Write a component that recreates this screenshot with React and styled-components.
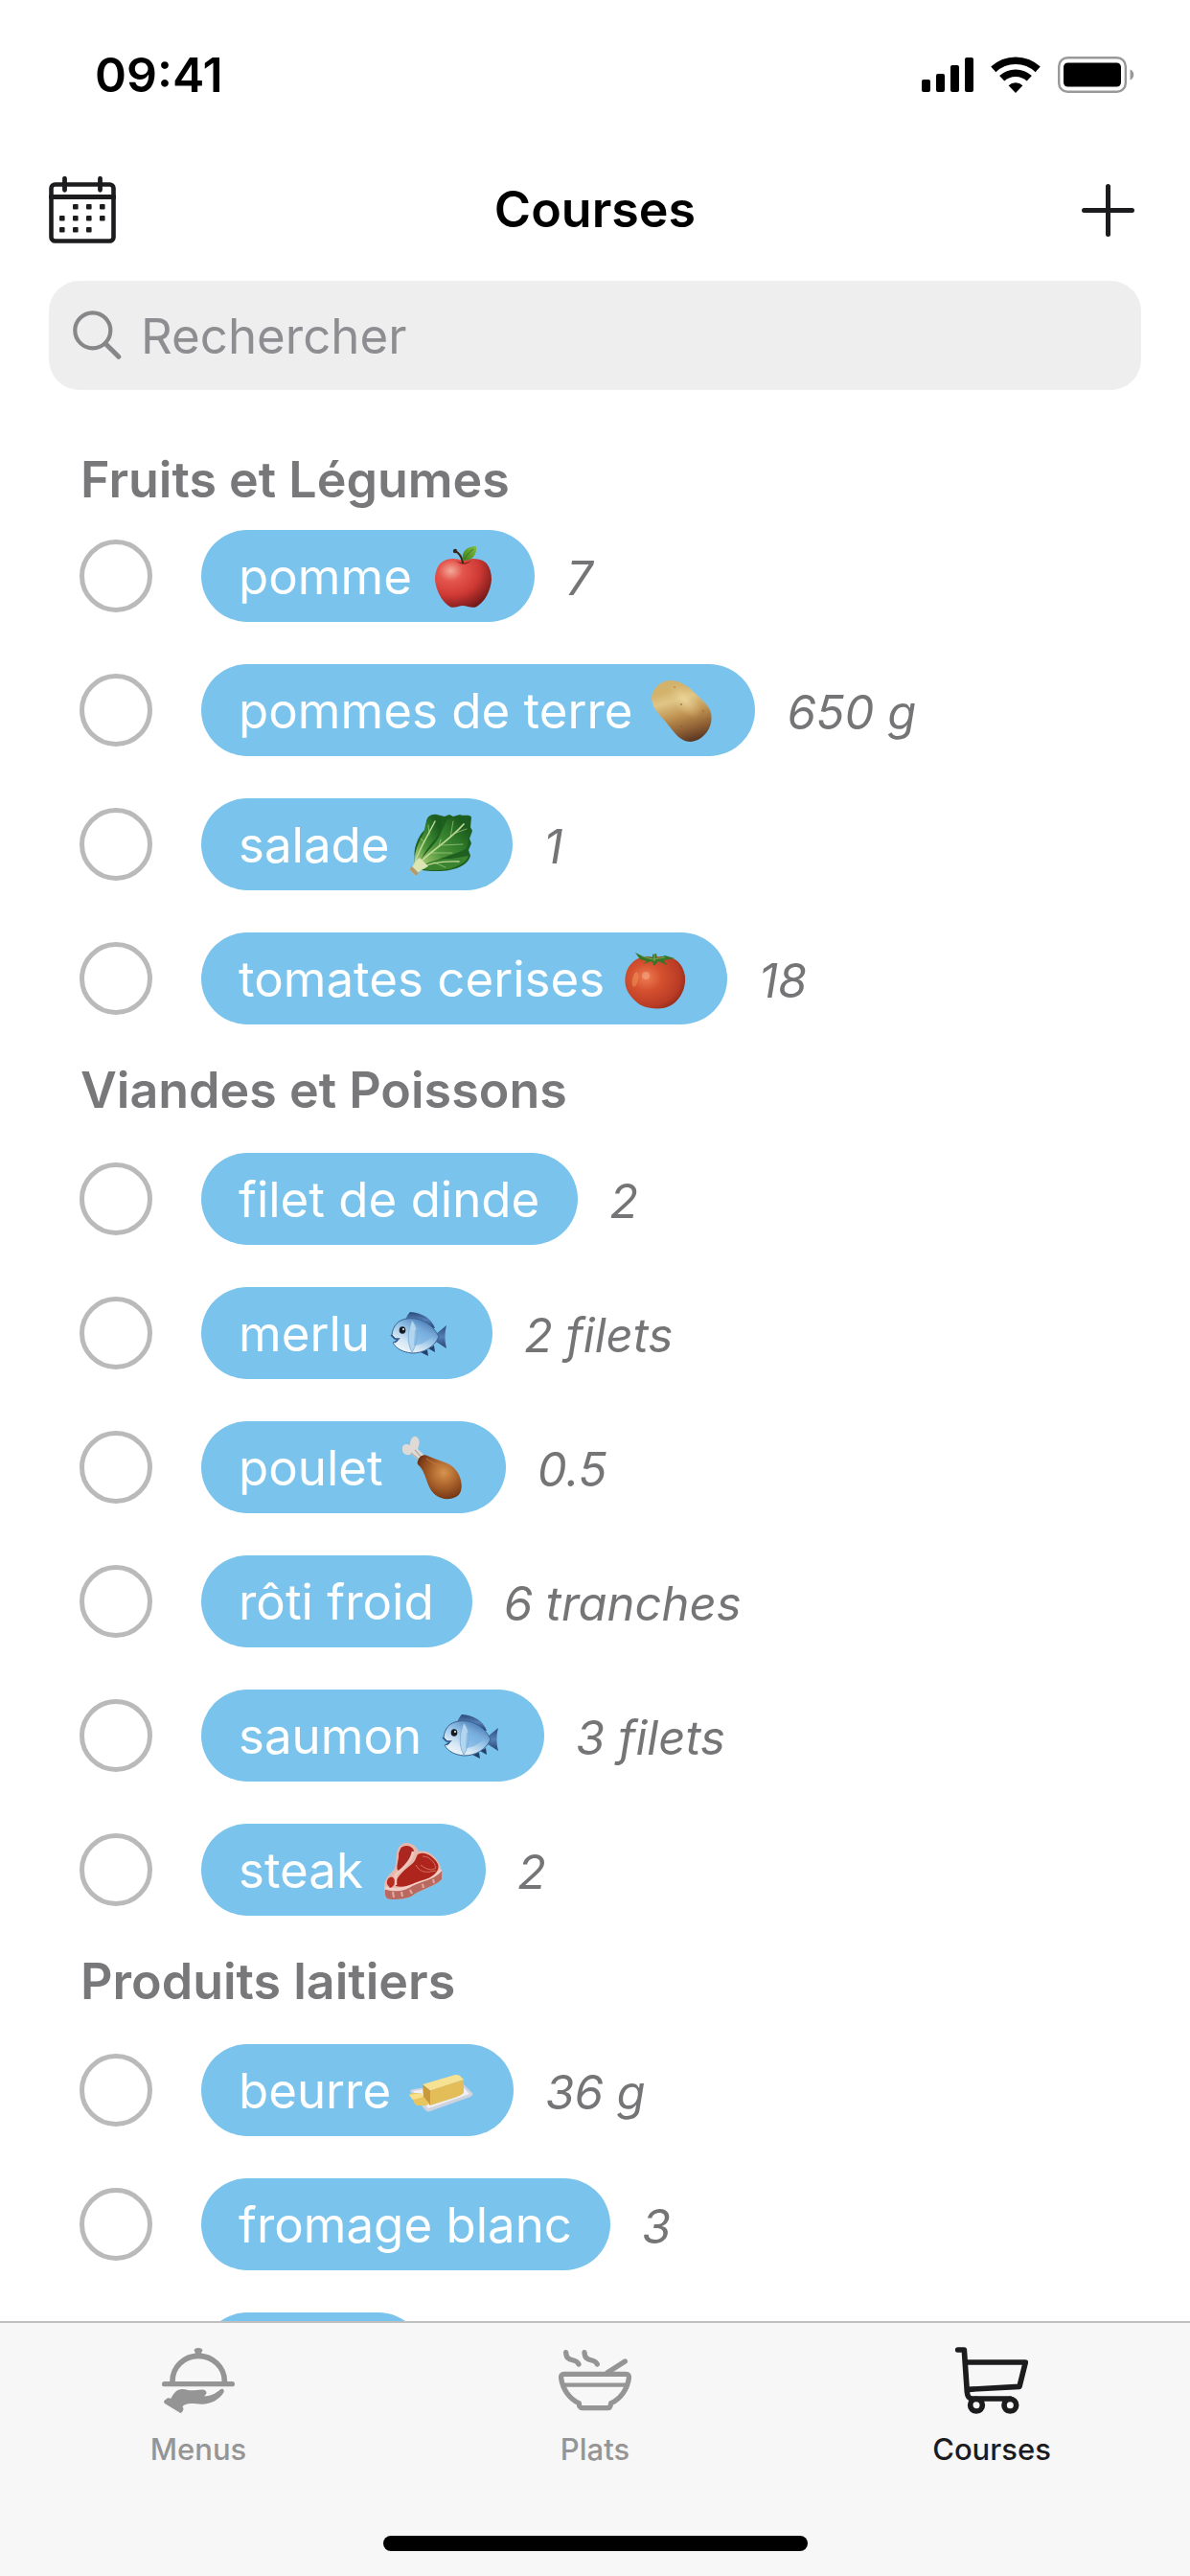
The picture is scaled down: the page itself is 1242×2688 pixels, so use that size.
import React, { useState } from 'react';
import styled, { createGlobalStyle } from 'styled-components';

const GlobalStyle = createGlobalStyle`
  * {
    box-sizing: border-box;
  }
  body {
    margin: 0;
    background: #fff;
    color: #000;
    font-family: Inter, "Liberation Sans", sans-serif;
  }
  button {
    font: inherit;
    color: inherit;
    border: none;
    background: none;
    padding: 0;
    cursor: pointer;
  }
`;

const Screen = styled.div`
  display: flex;
  flex-direction: column;
  height: 100vh;
`;

const StatusBar = styled.div`
  display: flex;
  align-items: center;
  justify-content: space-between;
  height: 156px;
  padding: 0 58px 0 99px;
`;

const Clock = styled.time`
  font-size: 50px;
  line-height: 60px;
  font-weight: 600;
`;

const StatusIcons = styled.div`
  display: flex;
  align-items: center;
  gap: 18px;
`;

const NavBar = styled.header`
  display: grid;
  grid-template-columns: 1fr auto 1fr;
  align-items: center;
  height: 126px;
  padding: 0 51px;
`;

const NavTitle = styled.h1`
  margin: 0;
  font-size: 52px;
  line-height: 60px;
  font-weight: 600;
`;

const NavButton = styled.button`
  display: flex;
  justify-self: ${({ $end }) => ($end ? 'end' : 'start')};
  padding: ${({ $end }) => ($end ? '7px' : '0')};
`;

const SearchBox = styled.label`
  display: flex;
  align-items: center;
  gap: 20px;
  height: 114px;
  flex-shrink: 0;
  margin: 11px 51px 0;
  padding: 0 25px;
  border-radius: 32px;
  background: #eeeeee;
`;

const SearchInput = styled.input`
  flex: 1;
  min-width: 0;
  padding: 0;
  border: none;
  outline: none;
  background: transparent;
  font-family: inherit;
  font-size: 51px;
  &::placeholder {
    color: #8e8e92;
    opacity: 1;
  }
`;

const List = styled.main`
  flex: 1;
  min-height: 0;
  overflow: hidden;
  padding-top: 47px;
`;

const SectionTitle = styled.h2`
  margin: 0;
  padding: 17px 84px 13px;
  font-size: 52px;
  line-height: 60px;
  font-weight: 600;
  color: #78787b;
  section:first-child > & {
    padding-bottom: 0;
  }
`;

const Items = styled.ul`
  margin: 0;
  padding: 0;
  list-style: none;
`;

const Item = styled.li`
  display: flex;
  align-items: center;
  height: 140px;
  padding: 0 83px;
`;

const Check = styled.input`
  appearance: none;
  flex-shrink: 0;
  width: 76px;
  height: 76px;
  margin: 0 51px 0 0;
  border: 5px solid #bababa;
  border-radius: 50%;
  cursor: pointer;
  &:checked {
    background: #7ac3ec;
    border-color: #7ac3ec;
  }
`;

const Pill = styled.label`
  display: flex;
  align-items: center;
  gap: 20px;
  height: 96px;
  padding: 0 40px 0 39px;
  border-radius: 48px;
  background: #7ac3ec;
  color: #fff;
  font-size: 51px;
  white-space: nowrap;
`;

const Quantity = styled.span`
  margin-left: 33px;
  padding-top: 4px;
  font-size: 49px;
  font-style: italic;
  color: #757577;
  white-space: nowrap;
`;

const TabBar = styled.nav`
  flex-shrink: 0;
  border-top: 2px solid #c0c0c1;
  background: #f7f7f7;
`;

const Tabs = styled.div`
  display: grid;
  grid-template-columns: repeat(3, 1fr);
`;

const Tab = styled.button`
  display: flex;
  flex-direction: column;
  align-items: center;
  padding-top: 24px;
  font-size: 31px;
  line-height: 36px;
  font-weight: 500;
  color: ${({ $active }) => ($active ? '#1c1c1e' : '#959595')};
`;

const TabIcon = styled.span`
  display: flex;
  align-items: center;
  height: 72px;
  margin-bottom: 18px;
`;

const HomeIndicator = styled.div`
  width: 443px;
  height: 16px;
  margin: 72px auto 26px;
  border-radius: 8px;
  background: #000;
`;

const EmojiSvg = styled.svg`
  width: 68px;
  height: 68px;
  overflow: visible;
`;

const SignalIcon = () => (
  <svg width="54" height="36" viewBox="0 0 54 36">
    <rect x="0" y="23" width="9" height="13" rx="2" />
    <rect x="15" y="17" width="9" height="19" rx="2" />
    <rect x="30" y="8" width="9" height="28" rx="2" />
    <rect x="45" y="0" width="9" height="36" rx="2" />
  </svg>
);

const WifiIcon = () => (
  <svg width="52" height="38" viewBox="0 0 52 38">
    <path d="M2.8 13.4a34 34 0 0 1 46.4 0" fill="none" stroke="#000" strokeWidth="7.6" />
    <path d="M11.7 22.8a21 21 0 0 1 28.6 0" fill="none" stroke="#000" strokeWidth="7.6" />
    <path d="M18.6 30.2a11 11 0 0 1 14.8 0L26 38z" />
  </svg>
);

const BatteryIcon = () => (
  <svg width="80" height="38" viewBox="0 0 80 38">
    <rect x="1.2" y="1.2" width="69.6" height="35.6" rx="9" fill="none" stroke="#999" strokeWidth="2.4" />
    <rect x="6" y="6.5" width="60" height="25" rx="4.5" />
    <path d="M75.5 13.5c5 1.5 5 9.5 0 11z" fill="#999" />
  </svg>
);

const dots = [
  [28, 32], [42, 32], [56, 32],
  [14, 44], [28, 44], [42, 44], [56, 44],
  [14, 56], [28, 56], [42, 56],
];

const CalendarIcon = () => (
  <svg width="70" height="70" viewBox="0 0 70 70">
    <rect x="2.5" y="8.5" width="65" height="59" rx="4" fill="none" stroke="#1c1c1e" strokeWidth="4.6" />
    <path d="M2 21.5h66M16.5 2.3v12M53.5 2.3v12" fill="none" stroke="#1c1c1e" strokeWidth="4.8" strokeLinecap="round" />
    {dots.map(([x, y]) => (
      <rect key={`${x}-${y}`} x={x - 3} y={y - 3} width="5.6" height="5.6" rx="1" fill="#1c1c1e" />
    ))}
  </svg>
);

const PlusIcon = () => (
  <svg width="55" height="55" viewBox="0 0 55 55">
    <path d="M27.5 2.5v50M2.5 27.5h50" stroke="#1c1c1e" strokeWidth="5" strokeLinecap="round" />
  </svg>
);

const SearchIcon = () => (
  <svg width="51" height="52" viewBox="0 0 51 52">
    <circle cx="20.8" cy="20.8" r="18.5" fill="none" stroke="#87878a" strokeWidth="4.2" />
    <path d="M34 34.5L47.8 48.3" stroke="#87878a" strokeWidth="5" strokeLinecap="round" />
  </svg>
);

const ClocheIcon = () => (
  <svg width="76" height="68" viewBox="207 150 228 204" fill="currentColor">
    <rect x="207" y="255" width="228" height="16" rx="8" />
    <path d="M240 258v-4c0-44 36-79 81-79s82 35 82 79v4" fill="none" stroke="currentColor" strokeWidth="17" />
    <path d="M310 168c3-4 0-6-2-9-1-4 3-9 13-9s14 5 13 9c-2 3-5 5-2 9z" />
    <path d="M215 314l8-6c4-3 7 0 12 0 6-9 13-27 34-29 12-1 20 5 33 4 14 0 24-4 36-2 9 2 11 11 5 16l-4 4c24 0 38-11 49-20 8-6 17 0 12 9-13 21-39 36-69 36-17 0-34-5-48 0-8 3-12 6-11 9 6 6-1 17-7 19l-48-29c-4-3-5-7-2-11z" />
  </svg>
);

const BowlIcon = () => (
  <svg width="76" height="64" viewBox="249 158 228 190" fill="none" stroke="currentColor" strokeWidth="16" strokeLinecap="round" strokeLinejoin="round">
    <path d="M266 233h194c7 0 10 5 9 13-4 32-25 64-56 78-1 9-4 15-10 15h-80c-6 0-10-6-10-15-31-14-52-46-56-78-1-8 2-13 9-13z" />
    <path d="M263 267h200" strokeWidth="13" strokeLinecap="butt" />
    <path d="M402 228l55-35" />
    <path d="M272 165c1 34 32 16 40 37M330 165c1 34 32 16 40 37" />
  </svg>
);

const CartIcon = () => (
  <svg width="76" height="70" viewBox="441 147 228 210" fill="none" stroke="currentColor" strokeWidth="17" strokeLinecap="round" strokeLinejoin="round">
    <path d="M449 156h20l9 132c1 14 5 21 17 21h118" />
    <path d="M474 195h187l-19 76-160 9" />
    <circle cx="507" cy="329" r="19" />
    <circle cx="613" cy="329" r="19" />
  </svg>
);

const Apple = () => (
  <>
    <defs>
      <radialGradient id="apple" cx="0.28" cy="0.25" r="0.85">
        <stop offset="0" stopColor="#f3aa9c" />
        <stop offset="0.25" stopColor="#e4564d" />
        <stop offset="0.6" stopColor="#cf3934" />
        <stop offset="1" stopColor="#6f1717" />
      </radialGradient>
      <linearGradient id="appleLeaf" x1="0" y1="1" x2="1" y2="0">
        <stop offset="0" stopColor="#3f7f1e" />
        <stop offset="1" stopColor="#7fbf42" />
      </linearGradient>
    </defs>
    <path d="M33 18C28 16 22 15 16 17C7 20 4 29 4 38C5 49 11 60 18 65C23 69 28 65 33 65C38 65 44 69 49 65C57 59 62 49 63 38C63 27 59 19 51 17C44 15 38 16 33 18Z" fill="url(#apple)" />
    <path d="M26 18Q33 22 42 18Q34 26 26 18Z" fill="#7d1d1b" opacity="0.7" />
    <path d="M33 20C32 14 29 10 25 8" fill="none" stroke="#3c2417" strokeWidth="2" strokeLinecap="round" />
    <circle cx="25" cy="8" r="2.2" fill="#3c2417" />
    <path d="M33 18C31 8 38 3 47 3C48 12 43 18 33 18Z" fill="url(#appleLeaf)" />
    <path d="M35 16Q39 9 44 6" fill="none" stroke="#326b17" strokeWidth="0.8" />
  </>
);

const Potato = () => (
  <>
    <defs>
      <linearGradient id="potato" x1="0.35" y1="0.15" x2="0.6" y2="1">
        <stop offset="0" stopColor="#d3b26c" />
        <stop offset="0.2" stopColor="#dfc686" />
        <stop offset="0.5" stopColor="#bf9251" />
        <stop offset="0.8" stopColor="#8b5c32" />
        <stop offset="1" stopColor="#5c3924" />
      </linearGradient>
      <radialGradient id="potatoLight">
        <stop offset="0" stopColor="#f2dda4" stopOpacity="0.7" />
        <stop offset="1" stopColor="#e6cb8b" stopOpacity="0" />
      </radialGradient>
    </defs>
    <path d="M20 3C29 3 37 8 43 14C49 20 57 26 61 34C67 49 55 66 41 67C29 67 24 57 17 49C11 41 0 33 0 21C1 11 10 3 20 3Z" fill="url(#potato)" />
    <ellipse cx="35" cy="24" rx="22" ry="12" fill="url(#potatoLight)" transform="rotate(48 35 24)" />
    <g fill="#8b6030" opacity="0.7">
      <circle cx="31" cy="28" r="1" />
      <circle cx="24" cy="10" r="0.8" />
      <circle cx="54" cy="35" r="0.9" />
      <circle cx="31" cy="51" r="1" />
      <circle cx="59" cy="43" r="0.9" />
    </g>
  </>
);

const Lettuce = () => (
  <>
    <defs>
      <linearGradient id="leaf" x1="0.1" y1="0.9" x2="0.9" y2="0.2">
        <stop offset="0" stopColor="#a3c670" />
        <stop offset="0.35" stopColor="#4f963b" />
        <stop offset="0.7" stopColor="#307c2b" />
        <stop offset="1" stopColor="#1c5c1e" />
      </linearGradient>
    </defs>
    <path d="M7 60C17 62 32 63 42 61C53 59 62 54 64 46L62 40L65 33L63 28L66 20L64 16L65 6C64 2 57 5 53 3L46 5L42 3L37 5L29 3C23 2 19 5 18 10L16 19C11 24 9 29 7 35C4 43 7 50 5 55Z" fill="#1f5f20" />
    <path d="M9 58C14 42 29 36 34 20L40 8C47 5 56 4 64 6C64 16 62 28 60 38C48 46 28 47 13 60Z" fill="url(#leaf)" />
    <path d="M6 54C5 43 9 35 12 28C18 21 16 12 21 6L32 5C36 13 32 22 27 29C19 38 14 45 10 57Z" fill="url(#leaf)" />
    <path d="M11 59C21 50 33 49 44 49L62 46C60 53 51 57 42 60C31 61 21 62 11 59Z" fill="#3a8430" />
    <g fill="none" stroke="#bfd997" strokeLinecap="round">
      <path d="M6 59C18 43 37 35 57 13" strokeWidth="1.8" />
      <path d="M5 56C11 37 18 28 27 10" strokeWidth="1.5" />
      <path d="M9 60Q24 51 52 52" strokeWidth="1.4" />
      <path d="M43 27L46 10M49 22L60 18M34 35L56 34M24 43L45 43M16 32L12 28M21 24L20 14M31 36L33 29M26 53L38 58" strokeWidth="0.6" />
    </g>
    <path d="M0 60C5 58 6 51 11 48L20 57C15 60 9 62 7 67Z" fill="#dbe5b2" />
    <path d="M0 60L7 67L10 64L3 57Z" fill="#b39b6f" />
  </>
);

const Tomato = () => (
  <>
    <defs>
      <radialGradient id="tomato" cx="0.35" cy="0.4" r="0.75">
        <stop offset="0" stopColor="#ee7d52" />
        <stop offset="0.35" stopColor="#d4502f" />
        <stop offset="0.75" stopColor="#b93c25" />
        <stop offset="1" stopColor="#852518" />
      </radialGradient>
    </defs>
    <path d="M31 12C20 8 5 15 2 30C-1 45 7 53 15 60C23 66 41 68 51 61C61 54 65 42 64 32C62 15 49 8 31 12Z" fill="url(#tomato)" />
    <ellipse cx="12" cy="35" rx="3" ry="8" fill="#ef9a55" opacity="0.5" transform="rotate(12 12 35)" />
    <ellipse cx="23" cy="31" rx="4" ry="4" fill="#f6b093" opacity="0.5" />
    <path d="M30 12L20 11L12 7L17 14L24 16L20 19L29 16L32 21L36 16L45 20L42 15L53 13L43 10L35 13L34 8L30 9Z" fill="#39742a" />
    <path d="M20 11L30 14L43 12M32 9L32 16" fill="none" stroke="#79a54b" strokeWidth="1.2" />
  </>
);

const Fish = () => (
  <>
    <defs>
      <linearGradient id="fish" x1="0" y1="1" x2="0.7" y2="0">
        <stop offset="0" stopColor="#ffffff" />
        <stop offset="0.35" stopColor="#d5e7f4" />
        <stop offset="0.65" stopColor="#8fbfe6" />
        <stop offset="1" stopColor="#4377b4" />
      </linearGradient>
      <linearGradient id="fin" x1="0" y1="0" x2="0" y2="1">
        <stop offset="0" stopColor="#2b4a78" />
        <stop offset="0.5" stopColor="#557fb6" />
        <stop offset="1" stopColor="#24406c" />
      </linearGradient>
    </defs>
    <path d="M17 21C18 17 20 14 22 12C34 13 44 18 48 29L34 27Z" fill="url(#fin)" />
    <path d="M49 35L60 26C58 33 58 43 60 50L49 43Z" fill="url(#fin)" />
    <path d="M27 53L40 52L41 58L33 54ZM41 50L47 47L48 54Z" fill="#24406c" />
    <path d="M3 36C4 27 9 20 19 19C33 17 46 25 52 38C47 49 36 55 24 55C15 54 8 51 4 44L9 42Z" fill="url(#fish)" stroke="#396391" strokeWidth="1" />
    <path d="M24 21C32 29 30 45 24 54C18 43 20 31 24 21Z" fill="#b3d6ef" stroke="#7aa9d3" strokeWidth="0.8" />
    <path d="M27 31C38 29 43 34 44 39C38 44 32 47 26 47Z" fill="#70acdf" opacity="0.6" />
    <ellipse cx="14" cy="31" rx="3.3" ry="3.8" fill="#161b22" />
    <circle cx="15" cy="30" r="1" fill="#fff" />
    <path d="M2 36L6 40L10 40L6 44" fill="none" stroke="#34598a" strokeWidth="1.6" />
  </>
);

const Drumstick = () => (
  <>
    <defs>
      <radialGradient id="meat" cx="0.6" cy="0.4" r="0.7">
        <stop offset="0" stopColor="#d6944f" />
        <stop offset="0.4" stopColor="#b0682e" />
        <stop offset="0.8" stopColor="#7f3e19" />
        <stop offset="1" stopColor="#522611" />
      </radialGradient>
    </defs>
    <path d="M19 28L9 20C5 23-1 20 0 14C0 10 4 9 8 11C8 5 11 1 14 2C19 4 18 10 16 15L26 25Z" fill="#dfdad6" />
    <path d="M9 19L20 28M13 16L21 25" fill="none" stroke="#b7afa9" strokeWidth="1.4" />
    <path d="M16 28C17 23 22 20 26 22C34 26 46 28 53 34C61 41 64 54 60 61C56 68 43 69 36 64C25 57 26 42 18 33C16 31 15 30 16 28Z" fill="url(#meat)" />
    <path d="M25 25Q34 32 46 34" fill="none" stroke="#c47b40" strokeWidth="1.4" opacity="0.6" />
  </>
);

const Steak = () => (
  <>
    <path d="M25 6C31 6 37 11 38 15C46 13 53 18 57 24C62 30 62 36 62 44C56 52 39 54 30 62C22 65 10 66 5 64C2 61 2 55 2 50C3 42 10 37 13 33C15 25 14 16 17 11C19 8 22 6 25 6Z" fill="#e9b8ad" />
    <path d="M3 54C13 55 23 56 30 51C42 46 56 43 62 35V44C55 52 39 54 30 62C22 65 10 66 5 64C3 62 2 58 3 54Z" fill="#b9695f" />
    <path d="M3 53C13 56 23 55 30 50C42 44 56 42 61 34" fill="none" stroke="#f2cdc4" strokeWidth="3" />
    <path d="M19 12C23 7 31 9 33 14C31 22 23 32 17 35C13 33 18 23 17 17Z" fill="#a92720" />
    <path d="M37 18C45 14 54 21 58 28C61 36 51 43 42 45C34 47 24 54 14 51C12 44 22 35 31 28C35 25 35 21 37 18Z" fill="#ad251c" />
    <path d="M5 49C4 43 9 40 11 42C16 46 12 52 8 53Z" fill="#b62d24" />
    <path d="M42 20C49 20 54 25 56 32C51 36 45 33 40 29M35 29C40 38 47 37 56 35" fill="none" stroke="#d66e60" strokeWidth="1" />
    <path d="M32 15C31 24 23 32 14 39L14 50" fill="none" stroke="#f1c8bd" strokeWidth="2.5" />
    <path d="M11 57L12 63M20 57L21 62M29 55L31 59M42 49L43 53M53 44L54 48" stroke="#e3aaa0" strokeWidth="2" />
  </>
);

const Butter = () => (
  <>
    <path d="M0 35C0 34 2 33 4 33L53 25L65 37C66 38 65 40 63 41L21 56C19 57 17 56 16 55Z" fill="#cfd3df" />
    <path d="M3 35L52 27L62 38L19 53Z" fill="#eef0f6" />
    <path d="M13 28L21 34V50L14 42Z" fill="#c99a3b" />
    <path d="M21 34L56 23V36C55 39 51 40 49 41L21 50Z" fill="#e3bd57" />
    <path d="M13 28L47 18C49 18 51 18 52 19L56 23L21 34Z" fill="#f7e192" />
    <path d="M-1 39C-1 37 8 37 11 37L20 48L17 50H7C5 49 4 46 3 44Z" fill="#e8c55f" />
    <path d="M-1 39L11 37L14 41L3 44Z" fill="#f8e08a" />
  </>
);

const emojis = {
  apple: Apple,
  potato: Potato,
  lettuce: Lettuce,
  tomato: Tomato,
  fish: Fish,
  drumstick: Drumstick,
  steak: Steak,
  butter: Butter,
};

const Emoji = ({ name }) => {
  const Drawing = emojis[name];
  return (
    <EmojiSvg viewBox="0 0 68 68" aria-hidden="true">
      <Drawing />
    </EmojiSvg>
  );
};

const sections = [
  {
    title: 'Fruits et Légumes',
    items: [
      { name: 'pomme', emoji: 'apple', quantity: '7' },
      { name: 'pommes de terre', emoji: 'potato', quantity: '650 g' },
      { name: 'salade', emoji: 'lettuce', quantity: '1' },
      { name: 'tomates cerises', emoji: 'tomato', quantity: '18' },
    ],
  },
  {
    title: 'Viandes et Poissons',
    items: [
      { name: 'filet de dinde', quantity: '2' },
      { name: 'merlu', emoji: 'fish', quantity: '2 filets' },
      { name: 'poulet', emoji: 'drumstick', quantity: '0.5' },
      { name: 'rôti froid', quantity: '6 tranches' },
      { name: 'saumon', emoji: 'fish', quantity: '3 filets' },
      { name: 'steak', emoji: 'steak', quantity: '2' },
    ],
  },
  {
    title: 'Produits laitiers',
    items: [
      { name: 'beurre', emoji: 'butter', quantity: '36 g' },
      { name: 'fromage blanc', quantity: '3' },
      { name: 'yaourt', quantity: '' },
    ],
  },
];

const tabs = [
  { label: 'Menus', Icon: ClocheIcon },
  { label: 'Plats', Icon: BowlIcon },
  { label: 'Courses', Icon: CartIcon },
];

const App = () => {
  const [checked, setChecked] = useState({});
  const [search, setSearch] = useState('');
  const [activeTab, setActiveTab] = useState('Courses');

  const toggle = (name) => {
    setChecked({ ...checked, [name]: !checked[name] });
  };

  return (
    <Screen>
      <GlobalStyle />
      <StatusBar>
        <Clock>09:41</Clock>
        <StatusIcons>
          <SignalIcon />
          <WifiIcon />
          <BatteryIcon />
        </StatusIcons>
      </StatusBar>
      <NavBar>
        <NavButton aria-label="Calendrier">
          <CalendarIcon />
        </NavButton>
        <NavTitle>Courses</NavTitle>
        <NavButton $end aria-label="Ajouter">
          <PlusIcon />
        </NavButton>
      </NavBar>
      <SearchBox>
        <SearchIcon />
        <SearchInput
          type="text"
          aria-label="Rechercher"
          placeholder="Rechercher"
          value={search}
          onChange={(e) => setSearch(e.target.value)}
        />
      </SearchBox>
      <List>
        {sections.map(({ title, items }) => (
          <section key={title}>
            <SectionTitle>{title}</SectionTitle>
            <Items>
              {items
                .filter(({ name }) => name.includes(search.toLowerCase()))
                .map(({ name, emoji, quantity }) => (
                  <Item key={name}>
                    <Check
                      type="checkbox"
                      id={name}
                      checked={!!checked[name]}
                      onChange={() => toggle(name)}
                    />
                    <Pill htmlFor={name}>
                      {name}
                      {emoji && <Emoji name={emoji} />}
                    </Pill>
                    <Quantity>{quantity}</Quantity>
                  </Item>
                ))}
            </Items>
          </section>
        ))}
      </List>
      <TabBar>
        <Tabs>
          {tabs.map(({ label, Icon }) => (
            <Tab key={label} $active={label === activeTab} onClick={() => setActiveTab(label)}>
              <TabIcon>
                <Icon />
              </TabIcon>
              {label}
            </Tab>
          ))}
        </Tabs>
        <HomeIndicator />
      </TabBar>
    </Screen>
  );
};

export default App;
